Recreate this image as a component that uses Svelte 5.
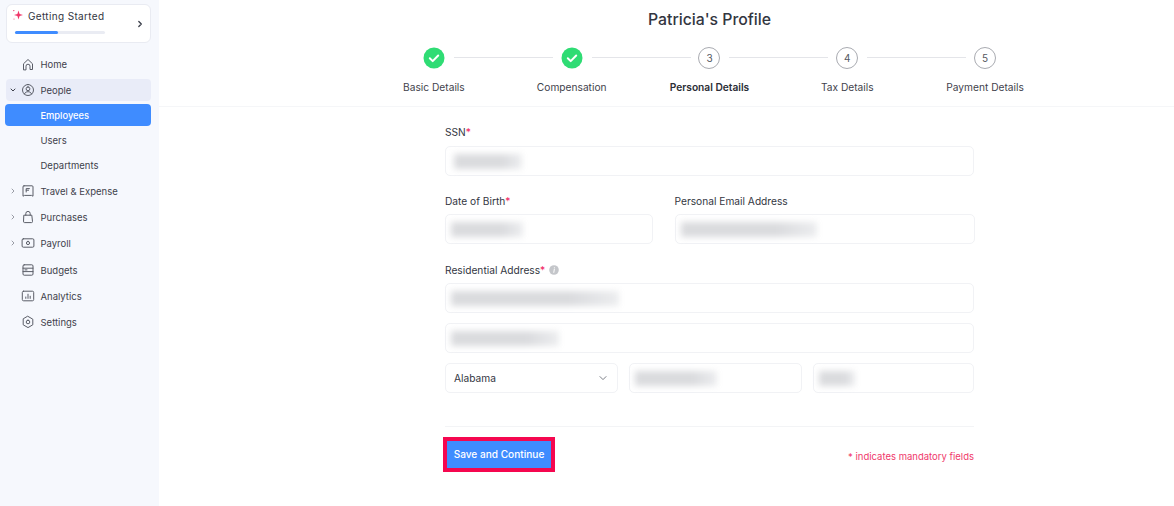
<script>
  const icons = {
    home: ["M2.5 12.5V6.8L7 2.5l4.5 4.3v5.7H9V9.2a2 2 0 0 0-4 0v3.3z"],
    user: ["M7 1.5a5.5 5.5 0 1 0 0 11a5.5 5.5 0 1 0 0-11z", "M7 3.9a1.9 1.9 0 1 0 0 3.8a1.9 1.9 0 1 0 0-3.8z", "M3.4 11c.6-1.6 2-2.3 3.6-2.3s3 .7 3.6 2.3"],
    travel: ["M3 1.8h8a1 1 0 0 1 1 1v9.4l-1.5-.8H3.5L2 12.2V2.8a1 1 0 0 1 1-1z", "M5.2 8V4.6h3.2M5.2 6.2h2.4"],
    bag: ["M3.2 5.2h7.6l.7 6.3a1 1 0 0 1-1 1.1H3.5a1 1 0 0 1-1-1.1z", "M4.8 5.2V3.6a2.2 2.2 0 0 1 4.4 0v1.6"],
    payroll: ["M2.3 2.8h9.4a1.2 1.2 0 0 1 1.2 1.2v6a1.2 1.2 0 0 1-1.2 1.2H2.3A1.2 1.2 0 0 1 1.1 10V4a1.2 1.2 0 0 1 1.2-1.2z", "M7 5.4a1.6 1.6 0 1 0 0 3.2a1.6 1.6 0 1 0 0-3.2z"],
    budgets: ["M3.2 1.8h7.6a1.2 1.2 0 0 1 1.2 1.2v8a1.2 1.2 0 0 1-1.2 1.2H3.2A1.2 1.2 0 0 1 2 11V3a1.2 1.2 0 0 1 1.2-1.2z", "M2 5.2h10M2 8.6h10M4 6.9h2"],
    analytics: ["M2.6 2.2h8.8a1.3 1.3 0 0 1 1.3 1.3v7a1.3 1.3 0 0 1-1.3 1.3H2.6a1.3 1.3 0 0 1-1.3-1.3v-7a1.3 1.3 0 0 1 1.3-1.3z", "M4.8 9.4V8M7 9.4V5.2M9.2 9.4V7.2"],
    settings: ["M7 1.4l4.8 2.8v5.6L7 12.6L2.2 9.8V4.2z", "M7 5.2a1.8 1.8 0 1 0 0 3.6a1.8 1.8 0 1 0 0-3.6z"],
  };

  const topNav = [
    { label: "Travel & Expense", icon: "travel", arrow: true },
    { label: "Purchases", icon: "bag", arrow: true },
    { label: "Payroll", icon: "payroll", arrow: true },
    { label: "Budgets", icon: "budgets" },
    { label: "Analytics", icon: "analytics" },
    { label: "Settings", icon: "settings" },
  ];

  const steps = [
    { label: "Basic Details", done: true },
    { label: "Compensation", done: true },
    { label: "Personal Details", n: 3, current: true },
    { label: "Tax Details", n: 4 },
    { label: "Payment Details", n: 5 },
  ];
</script>

{#snippet navIcon(name)}
  <svg class="icon" viewBox="0 0 14 14" width="14" height="14" fill="none" stroke="currentColor" stroke-width="1" stroke-linejoin="round" stroke-linecap="round">
    {#each icons[name] as d}
      <path {d} />
    {/each}
  </svg>
{/snippet}

{#snippet chevron(open)}
  <svg class="arrow" class:open viewBox="0 0 6 6" width="6" height="6" fill="none" stroke="currentColor" stroke-width="1" stroke-linecap="round" stroke-linejoin="round">
    <path d="M2 1l2 2-2 2" />
  </svg>
{/snippet}

<div class="page">
  <aside class="sidebar">
    <div class="started">
      <div class="started-text">
        <div class="started-title">
          <svg viewBox="0 0 12 12" width="12" height="12" fill="#f0386b">
            <path d="M6.5 1.5L7.6 4.9L11 6L7.6 7.1L6.5 10.5L5.4 7.1L2 6L5.4 4.9z" />
            <circle cx="1.8" cy="1.6" r="0.7" />
            <circle cx="2" cy="10" r="0.5" />
          </svg>
          Getting Started
        </div>
        <div class="progress"><div class="progress-fill"></div></div>
      </div>
      <svg viewBox="0 0 8 8" width="8" height="8" fill="none" stroke="#3b3f4a" stroke-width="1.3" stroke-linecap="round" stroke-linejoin="round">
        <path d="M2.8 1.5L5.3 4L2.8 6.5" />
      </svg>
    </div>

    <nav class="nav">
      <div class="row">
        <span class="slot"></span>
        {@render navIcon("home")}
        Home
      </div>
      <div class="group">
        <div class="row people">
          <span class="slot dark">{@render chevron(true)}</span>
          {@render navIcon("user")}
          People
        </div>
        <div class="row sub active">Employees</div>
        <div class="row sub">Users</div>
        <div class="row sub">Departments</div>
      </div>
      {#each topNav as item}
        <div class="row">
          <span class="slot">{#if item.arrow}{@render chevron(false)}{/if}</span>
          {@render navIcon(item.icon)}
          {item.label}
        </div>
      {/each}
    </nav>
  </aside>

  <main class="main">
    <header class="head">
      <h1>Patricia's Profile</h1>
      <div class="steps">
        {#each steps as step, i}
          <div class="step">
            {#if i > 0}<span class="line"></span>{/if}
            {#if step.done}
              <svg class="badge" viewBox="0 0 22 22" width="22" height="22">
                <circle cx="11" cy="11" r="10.5" fill="#2fdc74" />
                <path d="M6.8 11.3l2.9 2.8l5.5-5.6" fill="none" stroke="#fff" stroke-width="2" stroke-linecap="round" stroke-linejoin="round" />
              </svg>
            {:else}
              <span class="badge num">{step.n}</span>
            {/if}
            <span class="step-label" class:current={step.current}>{step.label}</span>
          </div>
        {/each}
      </div>
    </header>

    <form class="form">
      <div class="field">
        <span class="label">SSN<em>*</em></span>
        <div class="input"><span class="blur" style="width: 68px"></span></div>
      </div>

      <div class="two">
        <div class="field">
          <span class="label">Date of Birth<em>*</em></span>
          <div class="input tight"><span class="blur" style="width: 72px"></span></div>
        </div>
        <div class="field">
          <span class="label">Personal Email Address</span>
          <div class="input tight"><span class="blur" style="width: 136px"></span></div>
        </div>
      </div>

      <div class="field address">
        <span class="label">
          Residential Address<em>*</em>
          <svg viewBox="0 0 10 10" width="10" height="10">
            <circle cx="5" cy="5" r="4.8" fill="#c4c6ca" />
            <path d="M5.3 4.4L4.8 7.4M5.4 2.7v.3" stroke="#fff" stroke-width="1" stroke-linecap="round" />
          </svg>
        </span>
        <div class="input tight"><span class="blur" style="width: 168px"></span></div>
        <div class="input tight"><span class="blur" style="width: 108px"></span></div>
        <div class="three">
          <div class="input select">
            Alabama
            <svg viewBox="0 0 8 8" width="8" height="8" fill="none" stroke="#6c6f78" stroke-width="0.9" stroke-linecap="round" stroke-linejoin="round">
              <path d="M1 2.6L4 5.6L7 2.6" />
            </svg>
          </div>
          <div class="input tight"><span class="blur" style="width: 82px"></span></div>
          <div class="input tight"><span class="blur" style="width: 36px"></span></div>
        </div>
      </div>

      <div class="foot">
        <button type="button" class="save">Save and Continue</button>
        <span class="note">* indicates mandatory fields</span>
      </div>
    </form>
  </main>
</div>

<style>
  :global(body) {
    margin: 0;
    background: #fff;
  }

  .page {
    display: flex;
    width: 1174px;
    height: 506px;
    overflow: hidden;
    font-family: Inter, "Liberation Sans", sans-serif;
    font-size: 10px;
    color: #33363f;
  }

  .sidebar {
    width: 159px;
    flex-shrink: 0;
    box-sizing: border-box;
    padding: 4px 8px 0 5px;
    background: #f6f8fd;
  }

  .started {
    box-sizing: border-box;
    display: flex;
    align-items: center;
    justify-content: space-between;
    width: 145px;
    height: 39px;
    margin-left: 1px;
    padding: 0 6px 0 5px;
    background: #fff;
    border: 1px solid #e9ebf2;
    border-radius: 6px;
  }

  .started-title {
    display: flex;
    align-items: center;
    gap: 4px;
    font-size: 10px;
    line-height: 12px;
    letter-spacing: 0.35px;
    margin: -3px 0 9px 0;
  }

  .started-title svg {
    margin-top: -3px;
  }

  .progress {
    width: 90px;
    height: 3px;
    margin-left: 3px;
    background: #eaecf3;
    border-radius: 2px;
  }

  .progress-fill {
    width: 43px;
    height: 100%;
    background: #3f8cff;
    border-radius: 2px;
  }

  .nav {
    display: flex;
    flex-direction: column;
    gap: 4px;
    margin-top: 10px;
  }

  .nav > .row:nth-child(6) {
    margin-top: 1px;
  }

  .group {
    display: flex;
    flex-direction: column;
    gap: 3px;
  }

  .row {
    display: flex;
    align-items: center;
    height: 22px;
    font-size: 9.5px;
    color: #3f424c;
  }

  .slot {
    display: flex;
    align-items: center;
    justify-content: center;
    width: 15px;
    flex-shrink: 0;
    color: #9a9da6;
  }

  .slot.dark {
    color: #3f424c;
  }

  .arrow.open {
    transform: rotate(90deg);
  }

  .icon {
    flex-shrink: 0;
    margin: 0 5.5px 0 1px;
    color: #5a5d67;
  }

  .people {
    background: #e9ecf8;
    border-radius: 4px;
    margin-left: 1px;
  }

  .people .slot {
    width: 14px;
  }

  .sub {
    padding-left: 35.5px;
  }

  .active {
    background: #3f8cff;
    color: #fff;
    font-size: 9.3px;
    font-weight: 500;
    border-radius: 4px;
  }

  .main {
    flex: 1;
    min-width: 0;
  }

  .head {
    box-sizing: border-box;
    height: 107px;
    padding-top: 10px;
    padding-left: 86px;
    border-bottom: 1px solid #f5f6f8;
    text-align: center;
  }

  h1 {
    margin: 0;
    font-size: 15.8px;
    line-height: 19px;
    font-weight: 500;
    color: #33363f;
  }

  .steps {
    display: grid;
    grid-template-columns: repeat(5, 137.8px);
    justify-content: center;
    margin-top: 18px;
  }

  .step {
    position: relative;
    display: flex;
    flex-direction: column;
    align-items: center;
    gap: 12px;
  }

  .line {
    position: absolute;
    top: 10px;
    left: -49px;
    width: 99px;
    height: 1px;
    background: #e4e5e9;
  }

  .badge {
    display: block;
    width: 22px;
    height: 22px;
  }

  .num {
    box-sizing: border-box;
    border: 1px solid #a9abb1;
    border-radius: 50%;
    font-size: 10px;
    line-height: 20px;
    color: #555861;
  }

  .step-label {
    font-size: 10.2px;
    line-height: 12px;
    color: #3f424c;
  }

  .step-label.current {
    font-weight: 600;
    color: #2b2e36;
  }

  .form {
    width: 529px;
    margin-left: 286px;
    padding-top: 19px;
  }

  .field {
    display: flex;
    flex-direction: column;
    min-width: 0;
  }

  .label {
    display: flex;
    align-items: center;
    height: 12px;
    margin-bottom: 8px;
    font-size: 10.2px;
    color: #33363f;
  }

  .two .label {
    margin-bottom: 7px;
  }

  .label svg {
    margin-left: 4px;
  }

  em {
    font-style: normal;
    color: #f0245f;
  }

  .input {
    box-sizing: border-box;
    display: flex;
    align-items: center;
    height: 30px;
    padding-left: 8px;
    background: #fff;
    border: 1px solid #f1f2f5;
    border-radius: 5px;
  }

  .input.tight {
    padding-left: 5px;
  }

  .blur {
    display: block;
    height: 15px;
    background: linear-gradient(90deg, #dadbde 70%, #ecedef);
    filter: blur(3px);
  }

  .two {
    display: grid;
    grid-template-columns: 208px 300px;
    gap: 21.5px;
    margin-top: 19px;
  }

  .address {
    margin-top: 20px;
    gap: 10px;
  }

  .address .label {
    margin-bottom: -3px;
  }

  .three {
    display: grid;
    grid-template-columns: 173px 173px 161px;
    gap: 11px;
  }

  .select {
    justify-content: space-between;
    padding: 0 10px 0 8px;
    font-size: 10.2px;
    color: #33363f;
  }

  .foot {
    display: flex;
    align-items: center;
    justify-content: space-between;
    margin-top: 33px;
    padding-top: 10px;
    border-top: 1px solid #f3f4f6;
  }

  .save {
    box-sizing: border-box;
    width: 112px;
    height: 35px;
    margin-left: -2px;
    padding: 0 0 2px;
    background: #3f8cff;
    border: 4px solid #f5074f;
    color: #fff;
    font-family: inherit;
    font-size: 10.1px;
    font-weight: 500;
  }

  .note {
    padding-top: 3px;
    font-size: 9.5px;
    color: #f0386b;
  }
</style>
